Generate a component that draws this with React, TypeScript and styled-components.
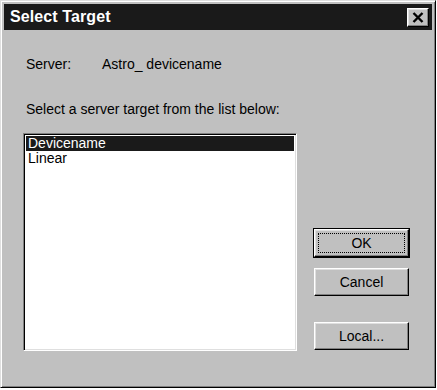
import React from "react";
import styled, { createGlobalStyle } from "styled-components";

const Global = createGlobalStyle`
  html, body { margin: 0; padding: 0; background: #ffffff; }
  body { font-family: "Liberation Sans", Arial, sans-serif; }
  * { box-sizing: border-box; }
`;

const Window = styled.div`
  width: 436px;
  height: 388px;
  background: #c0c0c0;
  border-top: 1px solid #dfdfdf;
  border-left: 1px solid #dfdfdf;
  border-right: 1px solid #000;
  border-bottom: 1px solid #000;
  box-shadow: inset 1px 1px #ffffff, inset -1px -1px #808080;
  padding: 3px;
  display: flex;
  flex-direction: column;
`;

const TitleBar = styled.div`
  height: 26px;
  background: #1a1a1a;
  display: flex;
  align-items: center;
  justify-content: space-between;
  padding: 0 3px 0 6px;
`;

const TitleText = styled.span`
  color: #ffffff;
  font-weight: bold;
  font-size: 16px;
  letter-spacing: 0.1px;
`;

const CloseButton = styled.div`
  width: 22px;
  height: 19px;
  background: #c0c0c0;
  border-top: 1px solid #ffffff;
  border-left: 1px solid #ffffff;
  border-right: 1px solid #000;
  border-bottom: 1px solid #000;
  box-shadow: inset -1px -1px #808080, inset 1px 1px #dfdfdf;
  display: flex;
  align-items: center;
  justify-content: center;
`;

const Body = styled.div`
  flex: 1;
  display: flex;
  flex-direction: column;
  padding: 26px 22px 33px 19px;
  font-size: 14px;
  color: #000;
`;

const ServerRow = styled.div`
  display: flex;
  padding-left: 3px;
  line-height: 17px;
`;

const FieldLabel = styled.span`
  width: 76px;
`;

const Prompt = styled.div`
  margin-top: 28px;
  padding-left: 3px;
  line-height: 17px;
`;

const Main = styled.div`
  flex: 1;
  display: flex;
  gap: 16px;
  margin-top: 15px;
`;

const ListBox = styled.div`
  flex: 1;
  background: #ffffff;
  border-top: 1px solid #808080;
  border-left: 1px solid #808080;
  border-right: 1px solid #ffffff;
  border-bottom: 1px solid #ffffff;
  box-shadow: inset 1px 1px #000, inset -1px -1px #dfdfdf;
  padding: 2px;
`;

const ListItem = styled.div<{ $selected?: boolean }>`
  height: 15px;
  line-height: 15px;
  padding-left: 2px;
  background: ${(p) => (p.$selected ? "#1a1a1a" : "transparent")};
  color: ${(p) => (p.$selected ? "#ffffff" : "#000")};
`;

const ButtonColumn = styled.div`
  width: 97px;
  display: flex;
  flex-direction: column;
  justify-content: flex-end;
`;

const Button = styled.div<{ $default?: boolean; $gap?: number }>`
  height: 30px;
  margin-top: ${(p) => p.$gap ?? 0}px;
  background: #c0c0c0;
  border: 1px solid ${(p) => (p.$default ? "#000" : "transparent")};
  display: flex;
  align-items: stretch;
`;

const ButtonFace = styled.div`
  flex: 1;
  border-top: 1px solid #ffffff;
  border-left: 1px solid #ffffff;
  border-right: 1px solid #000;
  border-bottom: 1px solid #000;
  box-shadow: inset -1px -1px #808080, inset 1px 1px #dfdfdf;
  display: flex;
  align-items: center;
  justify-content: center;
  padding: 3px;
`;

const Focus = styled.div`
  flex: 1;
  align-self: stretch;
  border: 1px dotted #000;
  display: flex;
  align-items: center;
  justify-content: center;
`;

export default function App() {
  return (
    <>
      <Global />
      <Window>
        <TitleBar>
          <TitleText>Select Target</TitleText>
          <CloseButton>
            <svg width="12" height="11" viewBox="0 0 12 11">
              <path d="M1.5 1 L10.5 10 M10.5 1 L1.5 10" stroke="#000" strokeWidth="2.4" />
            </svg>
          </CloseButton>
        </TitleBar>
        <Body>
          <ServerRow>
            <FieldLabel>Server:</FieldLabel>
            <span>Astro_ devicename</span>
          </ServerRow>
          <Prompt>Select a server target from the list below:</Prompt>
          <Main>
            <ListBox>
              <ListItem $selected>Devicename</ListItem>
              <ListItem>Linear</ListItem>
            </ListBox>
            <ButtonColumn>
              <Button $default>
                <ButtonFace>
                  <Focus>OK</Focus>
                </ButtonFace>
              </Button>
              <Button $gap={9}>
                <ButtonFace>Cancel</ButtonFace>
              </Button>
              <Button $gap={24}>
                <ButtonFace>Local...</ButtonFace>
              </Button>
            </ButtonColumn>
          </Main>
        </Body>
      </Window>
    </>
  );
}
